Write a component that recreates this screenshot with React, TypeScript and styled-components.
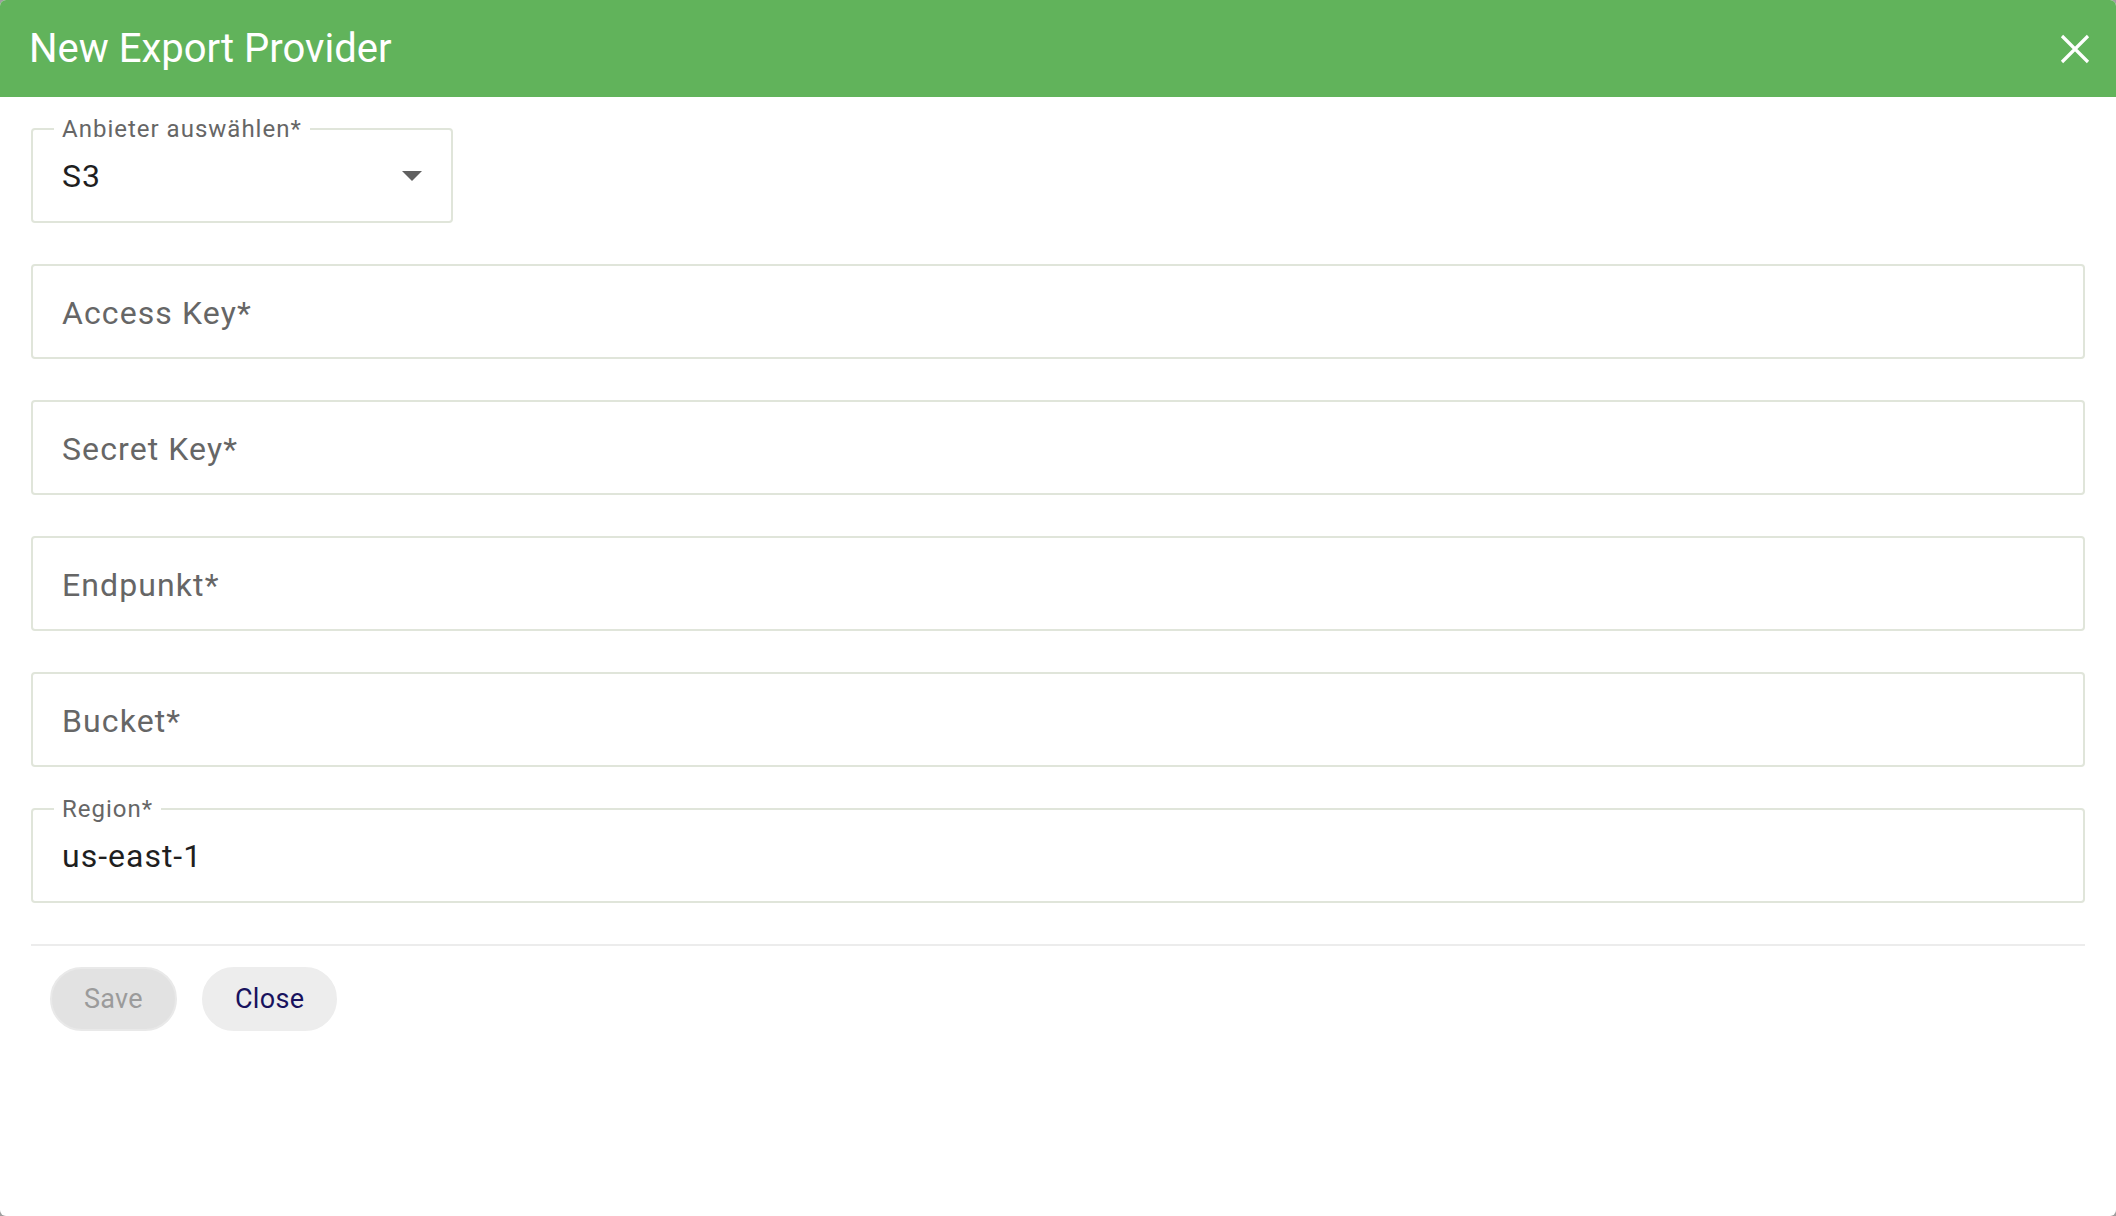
import React from "react";
import styled, { createGlobalStyle } from "styled-components";

const GlobalStyle = createGlobalStyle`
  html, body {
    margin: 0;
    padding: 0;
    background: #9e9e9e;
    font-family: Roboto, "Liberation Sans", Arial, sans-serif;
  }
  * { box-sizing: border-box; }
`;

const Dialog = styled.div`
  width: 100vw;
  height: 100vh;
  background: #ffffff;
  border-radius: 6px;
  overflow: hidden;
  display: flex;
  flex-direction: column;
`;

const Header = styled.header`
  height: 97px;
  flex: 0 0 97px;
  background: #61b35b;
  display: flex;
  align-items: center;
  justify-content: space-between;
  padding: 0 25px 0 29px;
`;

const Title = styled.h2`
  margin: 0;
  color: #ffffff;
  font-family: Roboto, "Liberation Sans", sans-serif;
  font-weight: 400;
  font-size: 40px;
  letter-spacing: 0;
  line-height: 1;
`;

const CloseButton = styled.button`
  width: 32px;
  height: 32px;
  padding: 0;
  border: 0;
  background: transparent;
  display: flex;
  align-items: center;
  justify-content: center;
  cursor: pointer;
`;

const Content = styled.div`
  padding: 31px 31px 0 31px;
  display: flex;
  flex-direction: column;
  gap: 41px;
`;

const Box = styled.div<{ $width?: number }>`
  position: relative;
  height: 95px;
  width: ${(p) => (p.$width ? `${p.$width}px` : "100%")};
  border: 2px solid #e0e5da;
  border-radius: 4px;
  display: flex;
  align-items: center;
  padding: 0 29px;
`;

const FloatLabel = styled.span`
  position: absolute;
  left: 21px;
  top: -16px;
  padding: 0 8px;
  background: #ffffff;
  color: #666666;
  font-family: Roboto, "Liberation Sans", sans-serif;
  font-size: 24px;
  line-height: 30px;
  letter-spacing: 1px;
`;

const Placeholder = styled.span`
  margin-top: 3px;
  color: #666666;
  font-family: Roboto, "Liberation Sans", sans-serif;
  font-size: 32px;
  letter-spacing: 1.1px;
`;

const Value = styled.span`
  flex: 1;
  color: #1f1f1f;
  font-family: Roboto, "Liberation Sans", sans-serif;
  font-size: 32px;
  letter-spacing: 1px;
`;

const Arrow = styled.span`
  width: 0;
  height: 0;
  border-left: 10px solid transparent;
  border-right: 10px solid transparent;
  border-top: 10px solid #606060;
`;

const Divider = styled.hr`
  margin: 0;
  border: 0;
  height: 2px;
  background: #ececec;
`;

const Footer = styled.div`
  display: flex;
  gap: 25px;
  padding: 0 0 0 19px;
  margin-top: -20px;
`;

const Pill = styled.button<{ $disabled?: boolean }>`
  height: 64px;
  padding: 0 ${(p) => (p.$disabled ? 32 : 31)}px;
  border-radius: 32px;
  border: 2px solid ${(p) => (p.$disabled ? "#e9e9e9" : "#ededed")};
  background: ${(p) => (p.$disabled ? "#e2e2e2" : "#ededed")};
  color: ${(p) => (p.$disabled ? "#9b9b9b" : "#18125e")};
  font-family: Roboto, "Liberation Sans", sans-serif;
  font-size: 27px;
  font-weight: 400;
  letter-spacing: 0.3px;
  cursor: pointer;
`;

const fields = [
  { label: "Access Key*" },
  { label: "Secret Key*" },
  { label: "Endpunkt*" },
  { label: "Bucket*" },
];

export default function App() {
  return (
    <>
      <GlobalStyle />
      <Dialog>
        <Header>
          <Title>New Export Provider</Title>
          <CloseButton aria-label="close">
            <svg width="30" height="30" viewBox="0 0 30 30">
              <path d="M2 2L28 28M28 2L2 28" stroke="#ffffff" strokeWidth="3.2" />
            </svg>
          </CloseButton>
        </Header>
        <Content>
          <Box $width={422}>
            <FloatLabel>Anbieter auswählen*</FloatLabel>
            <Value>S3</Value>
            <Arrow />
          </Box>
          {fields.map((f) => (
            <Box key={f.label}>
              <Placeholder>{f.label}</Placeholder>
            </Box>
          ))}
          <Box>
            <FloatLabel>Region*</FloatLabel>
            <Value>us-east-1</Value>
          </Box>
          <Divider />
          <Footer>
            <Pill $disabled>Save</Pill>
            <Pill>Close</Pill>
          </Footer>
        </Content>
      </Dialog>
    </>
  );
}
